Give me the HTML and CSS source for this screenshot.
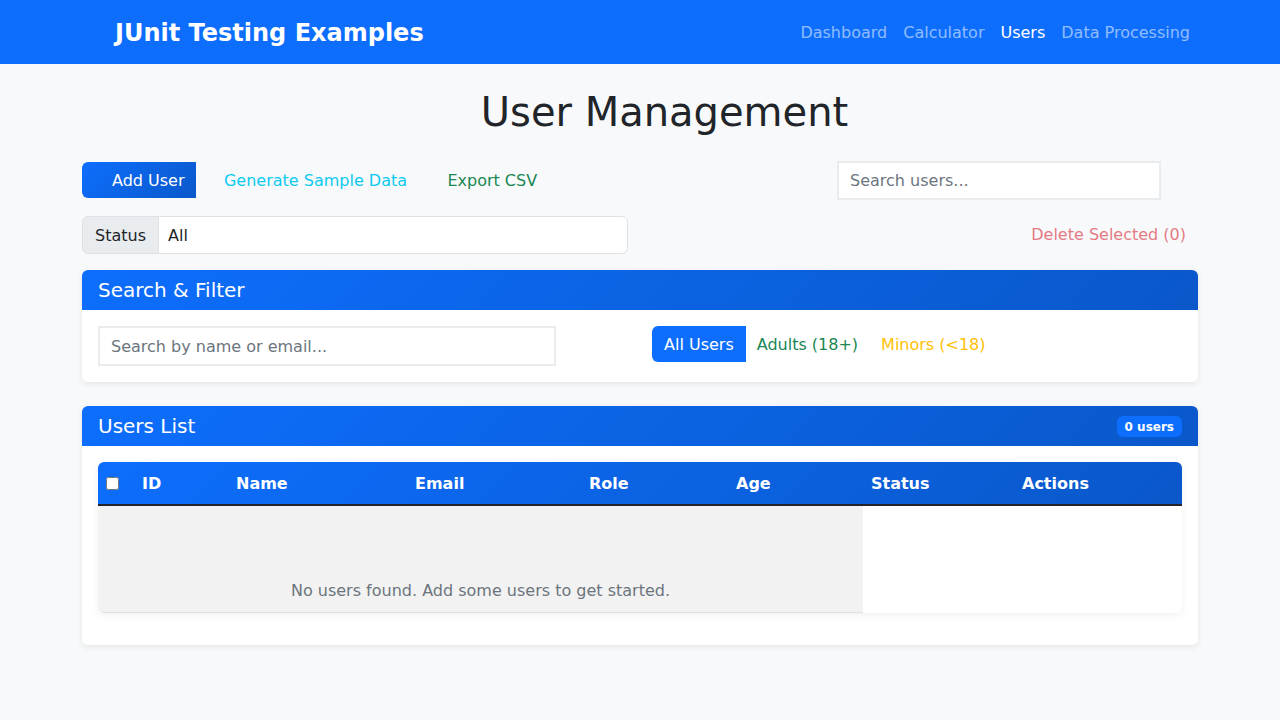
FILE: index.html
```html
<!DOCTYPE html>
<html lang="en">
<head>
<meta charset="utf-8">
<title>User Management</title>
<link rel="stylesheet" href="styles.css">
</head>
<body>
<nav class="navbar">
  <div class="nav-inner">
    <span class="brand">JUnit Testing Examples</span>
    <ul class="nav-links">
      <li><a class="nav-link">Dashboard</a></li>
      <li><a class="nav-link">Calculator</a></li>
      <li><a class="nav-link active">Users</a></li>
      <li><a class="nav-link">Data Processing</a></li>
    </ul>
  </div>
</nav>

<main class="container">
  <h1 class="title">User Management</h1>

  <div class="toolbar">
    <div class="actions">
      <button class="btn btn-add"><span class="icon-slot"></span>Add User</button>
      <button class="btn btn-text info">Generate Sample Data</button>
      <button class="btn btn-text success">Export CSV</button>
    </div>
    <input class="plain-input top-search" type="text" placeholder="Search users...">
  </div>

  <div class="toolbar-2">
    <div class="input-group">
      <span class="addon">Status</span>
      <span class="select">All</span>
    </div>
    <button class="btn btn-text danger-disabled">Delete Selected (0)</button>
  </div>

  <section class="card">
    <header class="card-header">Search &amp; Filter</header>
    <div class="card-body filter-body">
      <div class="filter-col">
        <input class="plain-input filter-search" type="text" placeholder="Search by name or email...">
      </div>
      <div class="filter-col filter-btns">
        <button class="btn btn-primary">All Users</button>
        <button class="btn btn-text success adults">Adults (18+)</button>
        <button class="btn btn-text warning">Minors (&lt;18)</button>
      </div>
    </div>
  </section>

  <section class="card">
    <header class="card-header header-flex">
      <span>Users List</span>
      <span class="badge">0 users</span>
    </header>
    <div class="card-body">
      <div class="table-wrap">
        <table class="table">
          <colgroup>
            <col class="c-check"><col class="c-id"><col class="c-name"><col class="c-email">
            <col class="c-role"><col class="c-age"><col class="c-status"><col class="c-actions">
          </colgroup>
          <thead>
            <tr>
              <th><input type="checkbox" class="check"></th>
              <th>ID</th>
              <th>Name</th>
              <th>Email</th>
              <th>Role</th>
              <th>Age</th>
              <th>Status</th>
              <th>Actions</th>
            </tr>
          </thead>
          <tbody>
            <tr>
              <td colspan="6" class="empty">No users found. Add some users to get started.</td>
            </tr>
          </tbody>
        </table>
      </div>
    </div>
  </section>
</main>
</body>
</html>
```
FILE: styles.css
```css
* { box-sizing: border-box; }

html, body {
  margin: 0;
  padding: 0;
}

body {
  background: #f8f9fa;
  color: #212529;
  font-family: "DejaVu Sans", "Noto Sans", sans-serif;
  font-size: 16px;
  line-height: 1.5;
}

/* Navbar */
.navbar {
  background: #0d6efd;
  height: 64px;
}
.nav-inner {
  width: 1140px;
  margin: 0 auto;
  height: 64px;
  display: flex;
  align-items: center;
  justify-content: space-between;
  padding: 2px 12px 0 45px;
}
.brand {
  color: #fff;
  font-weight: bold;
  font-size: 24px;
  line-height: 1.5;
}
.nav-links {
  list-style: none;
  margin: 0;
  padding: 0;
  display: flex;
}
.nav-link {
  display: block;
  padding: 8px 8px;
  color: rgba(255, 255, 255, 0.55);
  font-size: 16px;
}
.nav-link.active { color: #fff; }

/* Container */
.container {
  width: 1140px;
  margin: 0 auto;
  padding: 24px 12px 0;
}

.title {
  margin: 0 0 25px;
  padding-left: 49px;
  text-align: center;
  font-size: 40px;
  font-weight: 400;
  line-height: 1.2;
  color: #212529;
}

/* Buttons */
.btn {
  font-family: inherit;
  font-size: 16px;
  line-height: 24px;
  padding: 7px 12px 5px;
  border: 0;
  background: transparent;
  cursor: pointer;
  white-space: nowrap;
}
.btn-add {
  color: #fff;
  background: linear-gradient(135deg, #0d6efd, #0a58ca);
  border-radius: 6px 0 0 6px;
  display: inline-flex;
  align-items: center;
  padding-right: 11px;
}
.icon-slot {
  display: inline-block;
  width: 18px;
  height: 16px;
}
.btn-primary {
  background: #0d6efd;
  color: #fff;
  border-radius: 6px 0 0 6px;
}
.info { color: #0dcaf0; }
.success { color: #198754; }
.warning { color: #ffc107; }
.danger-disabled {
  color: #dc3545;
  opacity: 0.65;
  padding: 6px 12px;
}

/* Toolbar */
.toolbar {
  display: flex;
  align-items: center;
  justify-content: space-between;
  height: 38px;
  margin-bottom: 17px;
}
.actions {
  display: flex;
  align-items: center;
  gap: 16.4px;
}
.plain-input {
  font-family: inherit;
  font-size: 16px;
  line-height: 24px;
  color: #212529;
  background: #fff;
  border: 2px solid #e9ecef;
  border-radius: 0;
  outline: none;
}
.plain-input::placeholder { color: #6c757d; }
.top-search {
  width: 324px;
  height: 39px;
  padding: 5px 11px;
  margin-right: 37px;
}

.toolbar-2 {
  display: flex;
  align-items: center;
  justify-content: space-between;
  margin-bottom: 16px;
}
.input-group {
  display: flex;
  width: 546px;
  height: 38px;
}
.addon {
  background: #e9ecef;
  border: 1px solid #dee2e6;
  border-radius: 6px 0 0 6px;
  padding: 7px 12px 5px;
  line-height: 24px;
  color: #212529;
}
.select {
  flex: 1;
  background: #fff;
  border: 1px solid #dee2e6;
  border-left: 0;
  border-radius: 0 6px 6px 0;
  padding: 7px 9px 5px;
  line-height: 24px;
  color: #212529;
}

/* Cards */
.card {
  background: #fff;
  border-radius: 6px;
  box-shadow: 0 2px 6px rgba(0, 0, 0, 0.08);
  margin-bottom: 24px;
  overflow: hidden;
}
.card-header {
  background: linear-gradient(135deg, #0d6efd, #0a58ca);
  color: #fff;
  font-size: 20px;
  line-height: 24px;
  height: 40px;
  padding: 8px 16px;
}
.header-flex {
  display: flex;
  align-items: center;
  justify-content: space-between;
}
.badge {
  background: #0d6efd;
  color: #fff;
  font-size: 12px;
  font-weight: bold;
  line-height: 1;
  padding: 5.5px 8px 3.5px;
  border-radius: 6px;
}
.card-body {
  padding: 16px;
}
.filter-body {
  display: grid;
  grid-template-columns: 1fr 1fr;
  column-gap: 24px;
  height: 72px;
}
.filter-search {
  width: 458px;
  height: 40px;
  padding: 6px 11px;
}
.filter-btns {
  display: flex;
  align-items: flex-start;
}
.filter-btns .btn {
  height: 36px;
}
.filter-btns .adults {
  padding-left: 11px;
  padding-right: 11px;
}

/* Table */
.table-wrap {
  border-radius: 6px;
  overflow: hidden;
  box-shadow: 0 2px 8px rgba(0, 0, 0, 0.06);
  margin-bottom: 16px;
}
.table {
  width: 100%;
  border-collapse: collapse;
  table-layout: fixed;
}
.c-check { width: 36px; }
.c-id { width: 94px; }
.c-name { width: 179px; }
.c-email { width: 174px; }
.c-role { width: 147px; }
.c-age { width: 135px; }
.c-status { width: 151px; }
.c-actions { width: 168px; }

thead tr {
  background: linear-gradient(135deg, #0d6efd, #0a58ca);
}
th {
  color: #fff;
  font-weight: bold;
  text-align: left;
  padding: 10px 8px 8px;
  line-height: 24px;
  border-bottom: 2px solid #212529;
}
.check {
  margin: 0;
  width: 13px;
  height: 13px;
  vertical-align: -1px;
}
td.empty {
  background: #f2f2f2;
  color: #6c757d;
  text-align: center;
  padding: 73px 8px 9px;
  line-height: 24px;
  border-bottom: 1px solid #dee2e6;
}
```
